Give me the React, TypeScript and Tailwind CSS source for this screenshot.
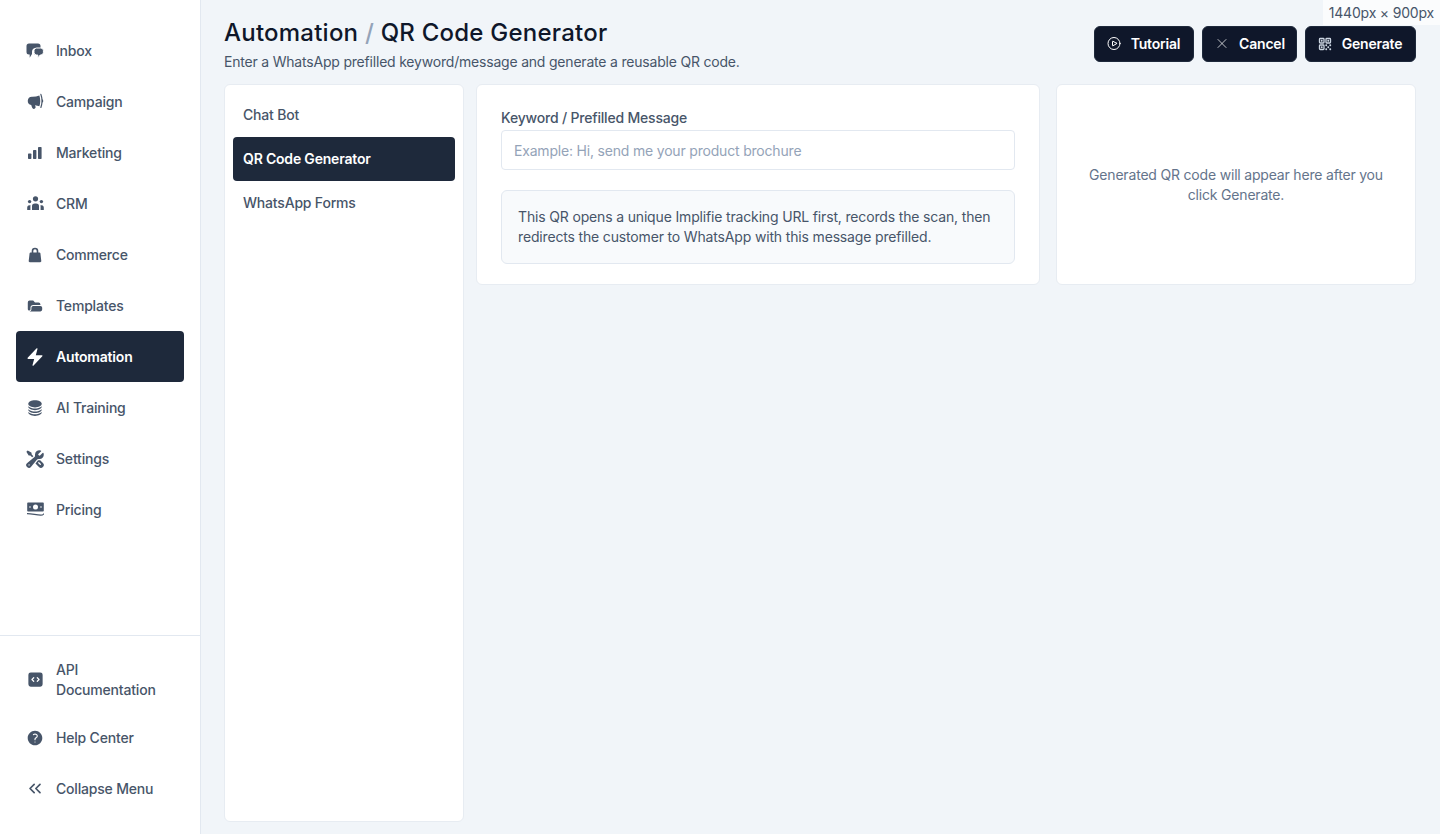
import React from "react";
import {
  HiMegaphone,
  HiBolt,
  HiCircleStack,
  HiWrenchScrewdriver,
  HiCodeBracketSquare,
  HiQuestionMarkCircle,
  HiOutlinePlayCircle,
  HiOutlineXMark,
  HiOutlineQrCode,
} from "react-icons/hi2";
import { HiFolderOpen } from "react-icons/hi";
import { ChevronsLeft } from "lucide-react";

const InboxIcon = () => (
  <svg width="18" height="18" viewBox="0 0 18 18" fill="currentColor">
    <path d="M3 1.500h9A2.500 2.500 0 0 1 14.500 4v2H10a4 4 0 0 0-4 4v2l-2.300 3.800V12.500H3A2.500 2.500 0 0 1 .5 10V4A2.500 2.500 0 0 1 3 1.500z" />
    <path
      d="M10.600 6h4.200A2.600 2.600 0 0 1 17.400 8.600v1.800a2.600 2.600 0 0 1-2.400 2.600h-.8l-2.400 3v-3h-1.200A2.600 2.600 0 0 1 8 10.400V8.600A2.600 2.600 0 0 1 10.600 6z"
      stroke="#ffffff"
      strokeWidth="1"
    />
  </svg>
);

const BarsIcon = () => (
  <svg width="14" height="14" viewBox="0 0 14 14" fill="currentColor">
    <rect x="0" y="7.500" width="3.400" height="5.500" rx="0.7" />
    <rect x="5" y="4" width="3.400" height="9" rx="0.7" />
    <rect x="10" y="1" width="3.600" height="12" rx="0.7" />
  </svg>
);

const PeopleIcon = () => (
  <svg width="17" height="15" viewBox="0 0 17 15" fill="currentColor">
    <circle cx="8.500" cy="2.800" r="2.600" />
    <path d="M5 14v-3.400A3 3 0 0 1 8 7.400h1a3 3 0 0 1 3 3.200V14z" />
    <circle cx="2.600" cy="5.600" r="1.700" />
    <path d="M.2 14v-2.400A2.600 2.600 0 0 1 3.600 9.300 5 5 0 0 0 3.400 11v3z" />
    <circle cx="14.400" cy="5.600" r="1.700" />
    <path d="M16.800 14v-2.400a2.600 2.600 0 0 0-3.400-2.300 5 5 0 0 1 .2 1.700v3z" />
  </svg>
);

const BagIcon = () => (
  <svg width="14" height="16" viewBox="0 0 14 16" fill="currentColor">
    <path d="M4.500 6V4a2.500 2.500 0 0 1 5 0v2" fill="none" stroke="currentColor" strokeWidth="1.600" />
    <path d="M2.600 5.400h8.800c.5 0 .9.4 1 .9l.9 7.600c.1.7-.4 1.300-1.100 1.300H1.800c-.7 0-1.200-.6-1.100-1.300l.9-7.600c.1-.5.5-.9 1-.9z" />
  </svg>
);

const MoneyIcon = () => (
  <svg width="17" height="15" viewBox="0 0 17 15" fill="currentColor">
    <path
      fillRule="evenodd"
      d="M1 .5h15a.8.8 0 0 1 .8.8v7.400a.8.8 0 0 1-.8.8H1a.8.8 0 0 1-.8-.8V1.300A.8.8 0 0 1 1 .5zM8.500 2.500a2.500 2.500 0 1 0 0 5 2.500 2.500 0 0 0 0-5zM3 4.200a.8.8 0 1 0 0 1.600.8.8 0 0 0 0-1.600zM14 4.200a.8.8 0 1 0 0 1.600.8.8 0 0 0 0-1.600z"
    />
    <path
      d="M.3 11.600c5 0 9 1.600 13.500 1.600 1.200 0 2.300-.4 2.900-1.200"
      fill="none"
      stroke="currentColor"
      strokeWidth="1.200"
      strokeLinecap="round"
    />
  </svg>
);

const nav = [
  { label: "Inbox", icon: <InboxIcon /> },
  { label: "Campaign", icon: <HiMegaphone size={19} /> },
  { label: "Marketing", icon: <BarsIcon /> },
  { label: "CRM", icon: <PeopleIcon /> },
  { label: "Commerce", icon: <BagIcon /> },
  { label: "Templates", icon: <HiFolderOpen size={18} /> },
  { label: "Automation", icon: <HiBolt size={20} />, active: true },
  { label: "AI Training", icon: <HiCircleStack size={18} /> },
  { label: "Settings", icon: <HiWrenchScrewdriver size={20} /> },
  { label: "Pricing", icon: <MoneyIcon /> },
];

function NavItem({ label, icon, active, tall }: any) {
  return (
    <div
      className={`flex items-center rounded-[4px] pl-[9px] pr-3 ${tall ? "h-[65px]" : "h-[51px]"} ${
        active ? "bg-[#1e293b] font-semibold text-white" : "font-medium text-[#475569]"
      } text-[14px] leading-[20px] tracking-[-0.19px]`}
    >
      <span className="flex w-[20px] shrink-0 justify-center">{icon}</span>
      <span className="ml-[11px]">{label}</span>
    </div>
  );
}

function TopButton({ icon, label, w }: any) {
  return (
    <button
      className={`${w} flex h-[36px] items-center justify-center gap-[9px] rounded-[6px] border border-[#1e293b] bg-[#0f172a] pb-[1px] text-[14px] font-semibold tracking-[-0.19px] text-white`}
    >
      <span className="flex w-[16px] justify-center">{icon}</span>
      {label}
    </button>
  );
}

export default function App() {
  return (
    <div
      className="relative flex h-[834px] w-[1440px] overflow-hidden bg-[#f1f5f9]"
      style={{ fontFamily: "Inter, 'Noto Sans', sans-serif" }}
    >
      <aside className="flex w-[201px] shrink-0 flex-col border-r border-[#e2e8f0] bg-white">
        <nav className="flex-1 px-4 pt-[25px]">
          {nav.map((n) => (
            <NavItem key={n.label} {...n} />
          ))}
        </nav>
        <div className="border-t border-[#e2e8f0] px-4 pb-[20px] pt-[11px]">
          <NavItem label="API Documentation" icon={<HiCodeBracketSquare size={19} />} tall />
          <NavItem label="Help Center" icon={<HiQuestionMarkCircle size={18} />} />
          <NavItem label="Collapse Menu" icon={<ChevronsLeft size={23} strokeWidth={2} />} />
        </div>
      </aside>

      <main className="flex min-w-0 flex-1 flex-col pb-[12px] pl-[23px] pr-[24px] pt-[17px]">
        <header className="flex h-[67px] shrink-0 items-start justify-between">
          <div>
            <h1 className="text-[24px] font-medium leading-[32px] tracking-[0.23px] text-[#0f172a]">
              Automation <span className="text-[#94a3b8]">/</span> QR Code Generator
            </h1>
            <p className="mt-[3px] text-[14px] leading-[20px] tracking-[-0.2px] text-[#475569]">
              Enter a WhatsApp prefilled keyword/message and generate a reusable QR code.
            </p>
          </div>
          <div className="flex gap-2 pt-[9px]">
            <TopButton w="w-[100px] pr-[2px]" label="Tutorial" icon={<HiOutlinePlayCircle size={19} />} />
            <TopButton w="w-[95px]" label="Cancel" icon={<HiOutlineXMark size={23} strokeWidth={1.1} />} />
            <TopButton
              w="w-[111px] pr-[2px]"
              label="Generate"
              icon={<HiOutlineQrCode size={18} strokeWidth={2} className="text-[#cbd5e1]" />}
            />
          </div>
        </header>

        <div className="flex min-h-0 flex-1 items-start">
          <div className="h-[738px] w-[240px] shrink-0 rounded-[6px] border border-[#e7ecf2] bg-white p-2 text-[14px] font-medium tracking-[-0.19px] text-[#475569]">
            <div className="flex h-[44px] items-center px-[10px] pb-[2px]">Chat Bot</div>
            <div className="flex h-[44px] items-center rounded-[4px] bg-[#1e293b] px-[10px] pb-[2px] font-semibold text-white">
              QR Code Generator
            </div>
            <div className="flex h-[44px] items-center px-[10px] pb-[2px]">WhatsApp Forms</div>
          </div>
          <div className="ml-[12px] h-[201px] w-[564px] shrink-0 rounded-[6px] border border-[#e7ecf2] bg-white px-[24px] pt-[23px]">
            <label className="block text-[14px] font-medium leading-[20px] tracking-[-0.19px] text-[#475569]">
              Keyword / Prefilled Message
            </label>
            <input
              readOnly
              placeholder="Example: Hi, send me your product brochure"
              className="mt-[2px] block h-[40px] w-full rounded-[4px] border border-[#e2e8f0] bg-white px-[12px] text-[14px] tracking-[-0.19px] outline-none placeholder:text-[#94a3b8]"
            />
            <div className="mt-[20px] rounded-[6px] border border-[#e2e8f0] bg-[#f8fafc] p-[16px] text-[14px] leading-[20px] tracking-[-0.16px] text-[#475569]">
              This QR opens a unique Implifie tracking URL first, records the scan, then redirects the customer to WhatsApp with this message prefilled.
            </div>
          </div>
          <div className="ml-[16px] flex h-[201px] w-[360px] shrink-0 items-center justify-center rounded-[6px] border border-[#e7ecf2] bg-white px-[24px] text-center text-[14px] leading-[20px] tracking-[-0.19px] text-[#64748b]">
            Generated QR code will appear here after you click Generate.
          </div>
        </div>
      </main>

      <div className="absolute right-0 top-0 h-[25px] bg-[#fbfcfd] px-[6px] text-[14px] leading-[26px] tracking-[-0.19px] text-[#475569]">
        1440px × 900px
      </div>
    </div>
  );
}
